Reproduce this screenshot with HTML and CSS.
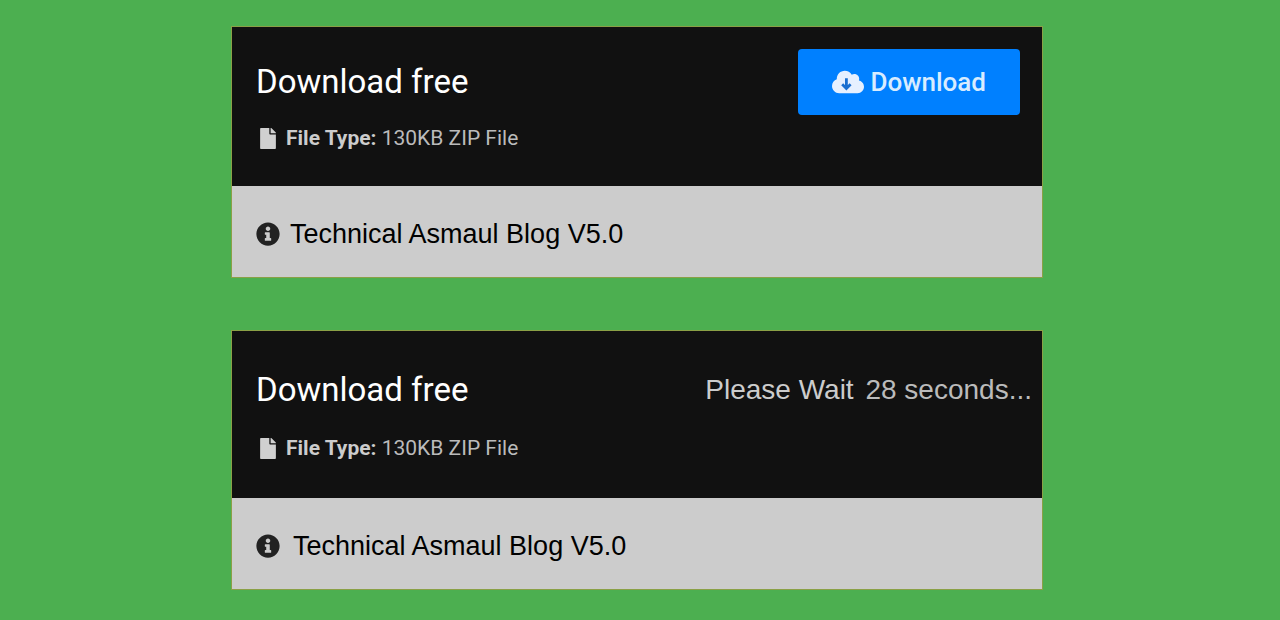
FILE: index.html
```html
<!DOCTYPE html>
<html lang="en">
<head>
    <meta charset="UTF-8">
    <meta name="viewport" content="width=device-width, initial-scale=1.0">
    <title>Download Box</title>
    <link rel="stylesheet" href="styles.css">
</head>
<body>
    <main class="container">
        <section class="download-box">
            <div class="box-top">
                <div class="file-info">
                    <h2>Download free</h2>
                    <p class="file-type">
                        <svg class="file-icon" viewBox="0 0 384 512" aria-hidden="true"><path d="M224 136V0H24C11 0 0 11 0 24v464c0 13 11 24 24 24h336c13 0 24-11 24-24V160H248c-13 0-24-11-24-24zm160-14v6H256V0h6c6 0 12 3 17 7l98 98c4 4 7 10 7 17z"/></svg>
                        <span><strong>File Type:</strong> 130KB ZIP File</span>
                    </p>
                </div>
                <button type="button" class="download-btn">
                    <svg class="cloud-icon" viewBox="0 0 640 512" aria-hidden="true">
                        <path d="M537.600 226.600c4.100-10.700 6.400-22.400 6.400-34.600 0-53-43-96-96-96-19.700 0-38.100 6-53.300 16.200C367 64.200 315.300 32 256 32c-88.400 0-160 71.600-160 160 0 2.700.1 5.400.2 8.100C40.200 219.800 0 273.200 0 336c0 79.500 64.500 144 144 144h368c70.700 0 128-57.300 128-128 0-61.900-44-113.600-102.400-125.400z"/>
                        <path class="cloud-arrow" d="M288 180v196M204 300l84 84 84-84"/>
                    </svg>
                    Download
                </button>
            </div>
            <div class="box-bottom">
                <svg class="info-icon" viewBox="0 0 512 512" aria-hidden="true"><path d="M256 8C119 8 8 119 8 256s111 248 248 248 248-111 248-248S393 8 256 8zm0 90c27 0 48 21 48 48s-21 48-48 48-48-21-48-48 21-48 48-48zm68 290c0 7-5 12-12 12H200c-7 0-12-5-12-12v-34c0-7 5-12 12-12h18v-68h-18c-7 0-12-5-12-12v-34c0-7 5-12 12-12h82c7 0 12 5 12 12v114h18c7 0 12 5 12 12z"/></svg>
                <span>Technical Asmaul Blog V5.0</span>
            </div>
        </section>

        <section class="download-box waiting">
            <div class="box-top">
                <div class="file-info">
                    <h2>Download free</h2>
                    <p class="file-type">
                        <svg class="file-icon" viewBox="0 0 384 512" aria-hidden="true"><path d="M224 136V0H24C11 0 0 11 0 24v464c0 13 11 24 24 24h336c13 0 24-11 24-24V160H248c-13 0-24-11-24-24zm160-14v6H256V0h6c6 0 12 3 17 7l98 98c4 4 7 10 7 17z"/></svg>
                        <span><strong>File Type:</strong> 130KB ZIP File</span>
                    </p>
                </div>
                <p class="countdown"><span class="wait-label">Please Wait</span> 28 seconds...</p>
            </div>
            <div class="box-bottom">
                <svg class="info-icon" viewBox="0 0 512 512" aria-hidden="true"><path d="M256 8C119 8 8 119 8 256s111 248 248 248 248-111 248-248S393 8 256 8zm0 90c27 0 48 21 48 48s-21 48-48 48-48-21-48-48 21-48 48-48zm68 290c0 7-5 12-12 12H200c-7 0-12-5-12-12v-34c0-7 5-12 12-12h18v-68h-18c-7 0-12-5-12-12v-34c0-7 5-12 12-12h82c7 0 12 5 12 12v114h18c7 0 12 5 12 12z"/></svg>
                <span>Technical Asmaul Blog V5.0</span>
            </div>
        </section>
    </main>
</body>
</html>
```
FILE: styles.css
```css
* {
    box-sizing: border-box;
}
body {
    font-family: Roboto, Arial, sans-serif;
    background-color: #4caf50;
    margin: 0;
    padding: 26px 6px 28px 0;
}
.container {
    max-width: 812px;
    margin: auto;
    display: flex;
    flex-direction: column;
    gap: 52px;
}
.download-box {
    border: 1px solid #8aa046;
}
.box-top {
    display: flex;
    justify-content: space-between;
    align-items: flex-start;
    background: #111;
    color: #ccc;
    padding: 22px 22px 34px 24px;
}
.file-info {
    padding-top: 13px;
}
h2 {
    margin: 0 0 22px;
    color: #fff;
    font-size: 33px;
    line-height: 40px;
    font-weight: 400;
}
.file-type {
    display: flex;
    align-items: center;
    gap: 10px;
    margin: 0;
    padding-left: 4px;
    font-size: 21px;
    line-height: 28px;
    color: #bbb;
}
.file-type strong {
    color: #ccc;
}
.file-icon {
    width: 16px;
    height: 21px;
    fill: #d0d0d0;
}
.download-btn {
    display: flex;
    align-items: center;
    gap: 6px;
    padding: 16px 34px;
    background: #0080ff;
    color: #d8ecff;
    border: none;
    border-radius: 4px;
    font-family: inherit;
    font-size: 26px;
    line-height: 34px;
    font-weight: 500;
    cursor: pointer;
}
.cloud-icon {
    width: 32px;
    height: 26px;
    fill: #e6f0ff;
}
.cloud-arrow {
    fill: none;
    stroke: #1a6fd0;
    stroke-width: 56;
}
.box-bottom {
    display: flex;
    align-items: center;
    gap: 10px;
    background: #ccc;
    color: #000;
    padding: 33px 24px 28px;
    font-family: "Liberation Sans", Arial, sans-serif;
    font-size: 27px;
    line-height: 30px;
}
.info-icon {
    width: 24px;
    height: 24px;
    fill: #222;
}
.countdown {
    margin: 0;
    font-family: "Liberation Sans", Arial, sans-serif;
    font-size: 28px;
    line-height: 40px;
    color: #bbb;
}
.wait-label {
    margin-right: 4px;
    color: #ccc;
}
.waiting .box-top {
    padding: 39px 10px 36px 24px;
}
.waiting .file-info {
    padding-top: 0;
}
.waiting h2 {
    margin-bottom: 24px;
}
.waiting .box-bottom {
    gap: 13px;
}
```
